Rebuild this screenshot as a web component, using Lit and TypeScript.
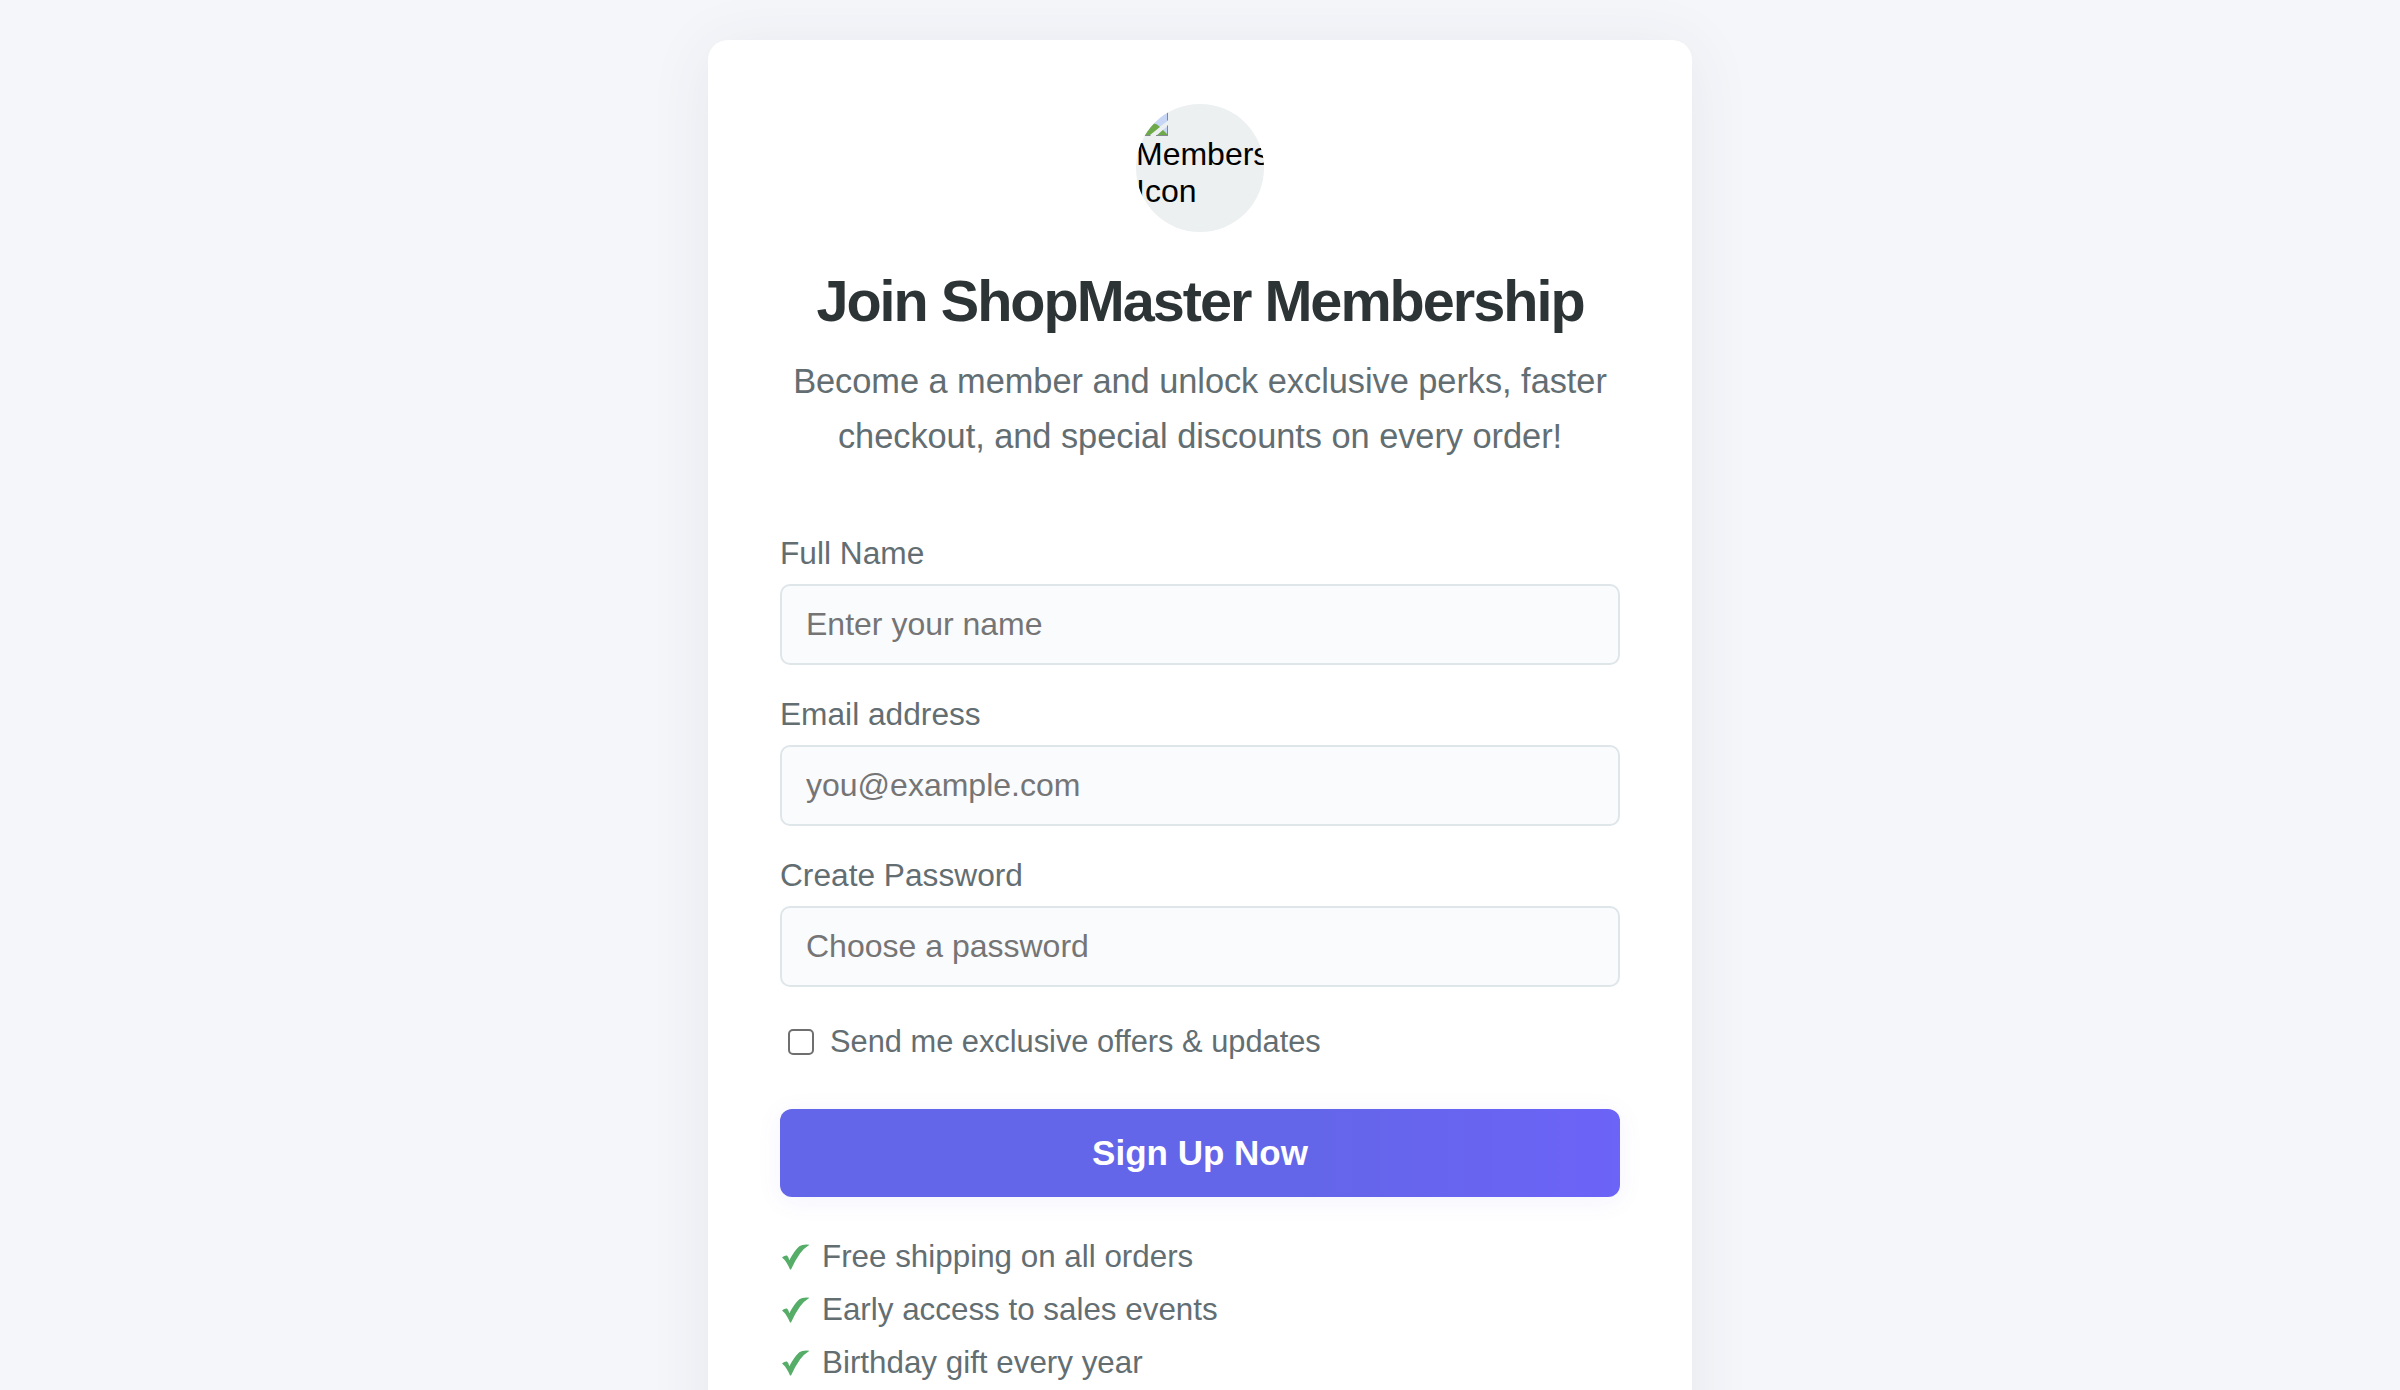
import { LitElement, html, css } from "lit";
import { customElement, state } from "lit/decorators.js";

@customElement("app-root")
export class AppRoot extends LitElement {
  @state() private fields = [
    { id: "name", label: "Full Name", type: "text", placeholder: "Enter your name" },
    { id: "email", label: "Email address", type: "email", placeholder: "you@example.com" },
    { id: "password", label: "Create Password", type: "password", placeholder: "Choose a password" },
  ];

  @state() private perks = [
    "Free shipping on all orders",
    "Early access to sales events",
    "Birthday gift every year",
  ];

  static styles = css`
    :host {
      display: flex;
      justify-content: center;
      align-items: flex-start;
      box-sizing: border-box;
      height: 1390px;
      padding-top: 40px;
      overflow: hidden;
      background: #f5f6fa;
      color: #636e72;
      font-family: "Liberation Sans", Arial, sans-serif;
    }
    .card {
      box-sizing: border-box;
      width: 984px;
      min-height: 1480px;
      padding: 64px 72px;
      border-radius: 20px;
      background: #fff;
      box-shadow: 0 8px 64px rgba(44, 62, 80, 0.08);
      display: flex;
      flex-direction: column;
    }
    .avatar {
      align-self: center;
      width: 128px;
      height: 128px;
      border-radius: 50%;
      overflow: hidden;
      background: #ecf0f1;
      color: #000;
      font-size: 32px;
      line-height: 37px;
    }
    .avatar svg {
      display: block;
      width: 32px;
      height: 32px;
    }
    .alt {
      display: block;
      width: 128px;
    }
    h1 {
      margin: 36px 0 0;
      font-size: 57.6px;
      line-height: 66px;
      letter-spacing: -2px;
      text-align: center;
      color: #2d3436;
      white-space: nowrap;
    }
    .intro {
      margin: 20px 0 0;
      font-size: 34.4px;
      line-height: 55px;
      letter-spacing: -0.05px;
      text-align: center;
    }
    .form {
      display: flex;
      flex-direction: column;
      margin-top: 71px;
    }
    .field {
      display: flex;
      flex-direction: column;
      margin-bottom: 31px;
    }
    label {
      font-size: 31.68px;
      line-height: 37px;
    }
    .input {
      box-sizing: border-box;
      width: 100%;
      height: 81px;
      margin-top: 12px;
      padding: 20px 24px;
      border: 2px solid #dfe6e9;
      border-radius: 10px;
      background: #fafbfd;
      font: 32px "Liberation Sans", Arial, sans-serif;
      outline: none;
    }
    .input::placeholder {
      color: #757575;
    }
    .optin {
      display: flex;
      align-items: center;
      gap: 16px;
      margin: 6px 0 0 8px;
      height: 36px;
    }
    .box {
      appearance: none;
      box-sizing: border-box;
      width: 26px;
      height: 26px;
      margin: 0;
      border: 2px solid #6f6f6f;
      border-radius: 5px;
      background: #fff;
    }
    .optin label {
      font-size: 30.8px;
      line-height: 36px;
    }
    .submit {
      height: 88px;
      margin-top: 49px;
      border: none;
      border-radius: 12px;
      background: linear-gradient(90deg, #6366e8 60%, #6c63f7 100%);
      box-shadow: 0 4px 24px rgba(99, 102, 241, 0.08);
      color: #fff;
      font: bold 35px "Liberation Sans", Arial, sans-serif;
    }
    .perks {
      list-style: none;
      margin: 33px 0 0;
      padding: 0;
    }
    .perk {
      display: flex;
      align-items: center;
      height: 53px;
      font-size: 31.36px;
      line-height: 53px;
    }
    .perk svg {
      width: 30px;
      height: 28px;
      margin: 0 12px 1px 0;
      flex: none;
    }
  `;

  render() {
    return html`
      <main class="card">
        <div class="avatar" role="img" aria-label="Membership Icon">
          <svg viewBox="0 0 32 32">
            <path d="M2 2H24L32 9V17L12 31H2Z" fill="#c8d6f5" />
            <path d="M4 31Q12 20 18 19.500Q21 19.500 24 23L14 31Z" fill="#6eaa49" />
            <path d="M20 31L32 21V31Z" fill="#c8d6f5" />
            <path d="M20 31L26.500 25.500L32 31Z" fill="#6eaa49" />
            <path d="M32 16.500L14.500 32H20L32 21.500Z" fill="#ecf0f1" />
            <path d="M2 31.500H14.500M20 31.500H32M31.500 4V16.500M31.500 21.500V32" stroke="#82888f" fill="none" />
          </svg>
          <span class="alt">Membership Icon</span>
        </div>
        <h1>Join ShopMaster Membership</h1>
        <p class="intro">Become a member and unlock exclusive perks, faster checkout, and special discounts on every order!</p>
        <form class="form">
          ${this.fields.map(
            (f) => html`
              <div class="field">
                <label for=${f.id}>${f.label}</label>
                <input class="input" id=${f.id} type=${f.type} placeholder=${f.placeholder} />
              </div>
            `,
          )}
          <div class="optin">
            <input class="box" id="offers" type="checkbox" />
            <label for="offers">Send me exclusive offers &amp; updates</label>
          </div>
          <button class="submit" type="button">Sign Up Now</button>
        </form>
        <ul class="perks">
          ${this.perks.map(
            (p) => html`
              <li class="perk">
                <svg viewBox="0 0 30 28">
                  <path d="M2 15.500Q4.500 13.200 7 13.500Q8.500 14.500 9.300 18.300Q14 9 19.300 4.200Q22.500 2 29.500 2.700Q24 6 20 11.500Q15 18.500 11 27.500H10Q6.500 19 2 15.500Z" fill="#55ad68" />
                </svg>
                <span>${p}</span>
              </li>
            `,
          )}
        </ul>
      </main>
    `;
  }
}
